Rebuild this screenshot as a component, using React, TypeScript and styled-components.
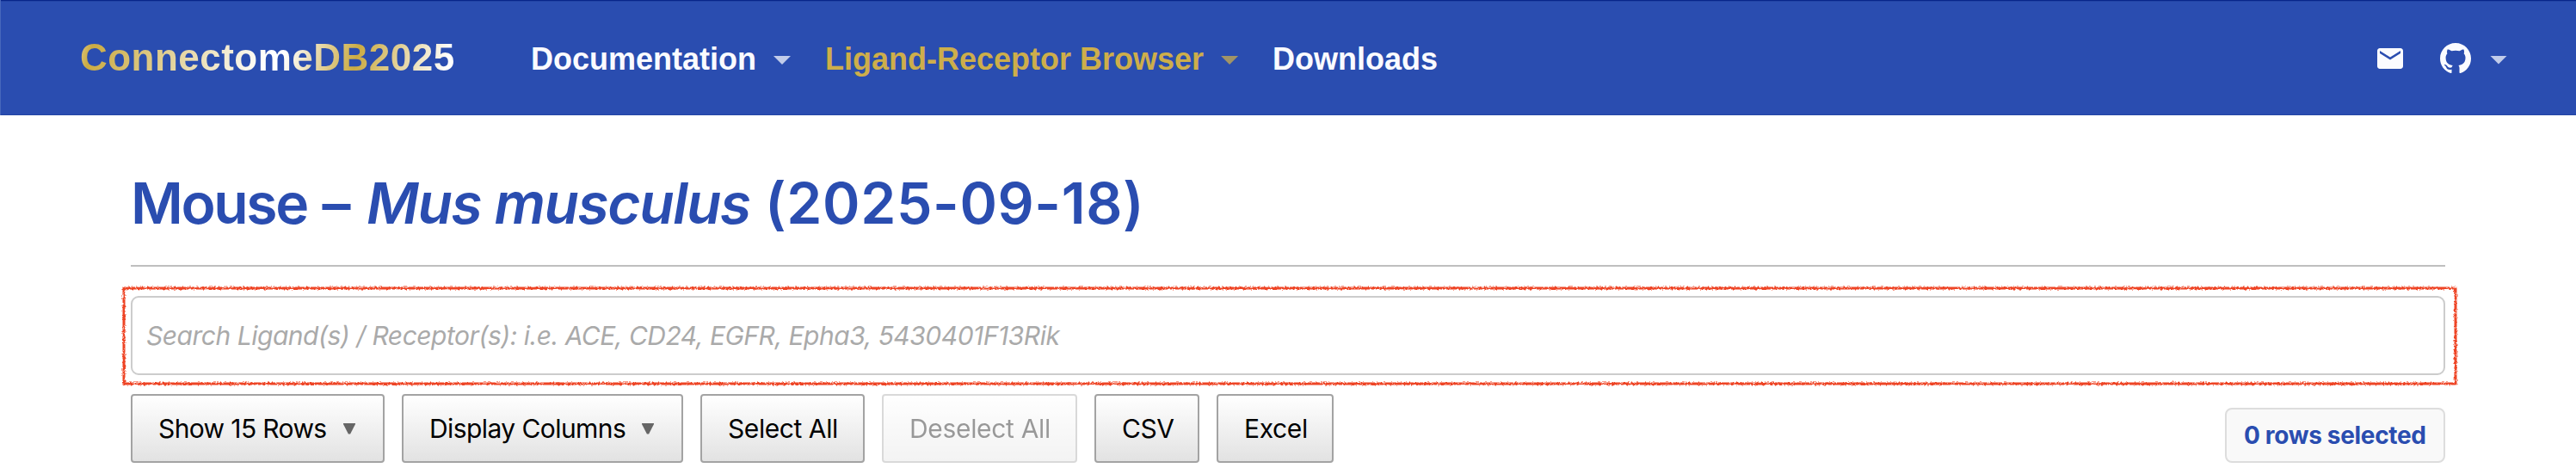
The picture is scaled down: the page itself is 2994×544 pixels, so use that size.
import React from "react";
import styled, { createGlobalStyle } from "styled-components";

const blue = "#2a4db0";
const gold = "#cdae4b";

const GlobalStyle = createGlobalStyle`
  * { box-sizing: border-box; }
  body {
    margin: 0;
    background: #fff;
    font-family: Inter, "Liberation Sans", sans-serif;
  }
`;

const Page = styled.div`
  height: 544px;
  overflow: hidden;
`;

const Header = styled.header`
  display: flex;
  align-items: center;
  height: 134px;
  padding: 0 80px 0 92px;
  background: ${blue};
  border-left: 1px solid #4767bb;
  box-shadow: inset 0 1px 0 #08268a, inset 0 2px 0 #2344a4, inset 0 -1px 0 #2446a5;
  font-family: "Liberation Sans", Arial, sans-serif;
  font-weight: 700;
`;

const Brand = styled.a`
  width: 436px;
  font-size: 44px;
  line-height: 54px;
  letter-spacing: 0.48px;
  white-space: nowrap;
  color: transparent;
  background: linear-gradient(
    105deg,
    #e0cc8c 0%,
    #cbab43 4%,
    #fff 50%,
    #fff 54%,
    #cbab43 73%,
    #fff 97%
  );
  background-clip: text;
  -webkit-background-clip: text;
`;

const Nav = styled.nav`
  display: flex;
  align-items: center;
  gap: 40px;
  margin: 3px 0 0 88px;
`;

const NavLink = styled.a<{ $active?: boolean }>`
  display: flex;
  align-items: center;
  gap: 20px;
  font-size: 36px;
  line-height: 44px;
  white-space: nowrap;
  color: ${(p) => (p.$active ? gold : "#fafbff")};
`;

const NavCaret = styled.i`
  width: 20px;
  height: 10px;
  margin-top: 3px;
  background: currentColor;
  opacity: 0.73;
  clip-path: polygon(0 0, 100% 0, 50% 100%);
`;

const Tools = styled.div`
  display: flex;
  align-items: center;
  margin: 2px 0 0 auto;
  color: #fafbff;
`;

const ToolLink = styled.a`
  display: flex;
  align-items: center;
  margin-left: 40px;
  gap: 22px;
  svg {
    display: block;
  }
`;

const Main = styled.main`
  padding: 62px 152px 0;
`;

const Title = styled.h1`
  margin: 0;
  height: 80px;
  font-size: 66px;
  line-height: 80px;
  font-weight: 600;
  letter-spacing: 1px;
  white-space: pre;
  color: ${blue};
`;

const CommonName = styled.span`
  letter-spacing: -2.4px;
`;

const Species = styled.em`
  letter-spacing: -1.44px;
`;

const Release = styled.span`
  letter-spacing: 0.61px;
`;

const Divider = styled.hr`
  height: 2px;
  margin: 32px 0 34px;
  border: 0;
  background: #bfbfbf;
`;

const SearchArea = styled.div`
  position: relative;
  height: 92px;
`;

const SearchInput = styled.input`
  display: block;
  width: 100%;
  height: 92px;
  padding: 0 16px;
  border: 2px solid #ccc;
  border-radius: 9px;
  background: #fff;
  font: 400 30px Inter, "Liberation Sans", sans-serif;
  letter-spacing: -0.48px;
  &::placeholder {
    color: #aaa;
    opacity: 1;
    font-style: italic;
  }
`;

const Marker = styled.svg`
  position: absolute;
  left: -16px;
  top: -17px;
  pointer-events: none;
`;

const Toolbar = styled.div`
  display: flex;
  align-items: flex-end;
  gap: 20px;
  margin-top: 22px;
`;

const Button = styled.button<{ $width: number; $tracking: number }>`
  display: flex;
  align-items: center;
  justify-content: space-between;
  width: ${(p) => p.$width}px;
  height: 80px;
  padding: 0 32px 0 30px;
  border: 2px solid #a3a3a3;
  border-radius: 4px;
  background: linear-gradient(to bottom, #fff 0%, #e2e2e2 100%);
  font: 400 30px Inter, "Liberation Sans", sans-serif;
  letter-spacing: ${(p) => p.$tracking}px;
  white-space: nowrap;
  color: #000;
  &:disabled {
    opacity: 0.4;
  }
`;

const MenuCaret = styled.i`
  width: 14px;
  height: 13px;
  background: #666;
  clip-path: polygon(0 0, 100% 0, 100% 12%, 58% 100%, 42% 100%, 0 12%);
`;

const SelectedCount = styled.div`
  width: 256px;
  height: 64px;
  margin-left: auto;
  padding-left: 20px;
  border: 2px solid #ddd;
  border-radius: 8px;
  background: #f9f9f9;
  font-size: 28px;
  line-height: 60px;
  font-weight: 700;
  letter-spacing: -0.33px;
  white-space: nowrap;
  color: ${blue};
`;

const buttons = [
  { label: "Show 15 Rows", width: 295, tracking: -0.62, menu: true },
  { label: "Display Columns", width: 327, tracking: -0.58, menu: true },
  { label: "Select All", width: 191, tracking: -0.43 },
  { label: "Deselect All", width: 227, tracking: -0.33, disabled: true },
  { label: "CSV", width: 122, tracking: -0.5 },
  { label: "Excel", width: 136, tracking: -0.34 },
];

export default function App() {
  return (
    <Page>
      <GlobalStyle />
      <Header>
        <Brand>ConnectomeDB2025</Brand>
        <Nav>
          <NavLink>
            Documentation
            <NavCaret />
          </NavLink>
          <NavLink $active>
            Ligand-Receptor Browser
            <NavCaret />
          </NavLink>
          <NavLink>Downloads</NavLink>
        </Nav>
        <Tools>
          <ToolLink aria-label="Email">
            <svg width="36" height="36" viewBox="0 0 24 24" fill="currentColor">
              <path d="M20 4H4c-1.1 0-1.99.9-1.99 2L2 18c0 1.1.9 2 2 2h16c1.1 0 2-.9 2-2V6c0-1.1-.9-2-2-2zm0 4l-8 5-8-5V6l8 5 8-5v2z" />
            </svg>
          </ToolLink>
          <ToolLink aria-label="GitHub">
            <svg width="36" height="36" viewBox="0 0 16 16" fill="currentColor">
              <path d="M8 0C3.58 0 0 3.58 0 8c0 3.54 2.29 6.53 5.47 7.59.4.07.55-.17.55-.38 0-.19-.01-.82-.01-1.49-2.01.37-2.53-.49-2.69-.94-.09-.23-.48-.94-.82-1.13-.28-.15-.68-.52-.01-.53.63-.01 1.08.58 1.23.82.72 1.21 1.87.87 2.33.66.07-.52.28-.87.51-1.07-1.78-.2-3.64-.89-3.64-3.95 0-.87.31-1.59.82-2.15-.08-.2-.36-1.02.08-2.12 0 0 .67-.21 2.2.82.64-.18 1.32-.27 2-.27s1.36.09 2 .27c1.53-1.04 2.2-.82 2.2-.82.44 1.1.16 1.92.08 2.12.51.56.82 1.27.82 2.15 0 3.07-1.87 3.75-3.65 3.95.29.25.54.73.54 1.48 0 1.07-.01 1.93-.01 2.2 0 .21.15.46.55.38A8.01 8.01 0 0 0 16 8c0-4.42-3.58-8-8-8z" />
            </svg>
            <NavCaret />
          </ToolLink>
        </Tools>
      </Header>
      <Main>
        <Title>
          <CommonName>Mouse</CommonName>
          {" – "}
          <Species>Mus musculus</Species>
          <Release>{" (2025-09-18)"}</Release>
        </Title>
        <Divider />
        <SearchArea>
          <SearchInput placeholder="Search Ligand(s) / Receptor(s): i.e. ACE, CD24, EGFR, Epha3, 5430401F13Rik" />
          <Marker width="2726" height="127" viewBox="0 0 2726 127">
            <filter id="crayon" x="0" y="0" width="2726" height="127" filterUnits="userSpaceOnUse">
              <feTurbulence type="fractalNoise" baseFrequency="0.45" numOctaves="2" seed="4" />
              <feDisplacementMap in="SourceGraphic" scale="4" xChannelSelector="R" yChannelSelector="G" />
            </filter>
            <rect x="8" y="8" width="2710" height="111" fill="none" stroke="#ee4427" strokeWidth="3" filter="url(#crayon)" />
          </Marker>
        </SearchArea>
        <Toolbar>
          {buttons.map((b) => (
            <Button key={b.label} $width={b.width} $tracking={b.tracking} disabled={b.disabled}>
              {b.label}
              {b.menu && <MenuCaret />}
            </Button>
          ))}
          <SelectedCount>0 rows selected</SelectedCount>
        </Toolbar>
      </Main>
    </Page>
  );
}
